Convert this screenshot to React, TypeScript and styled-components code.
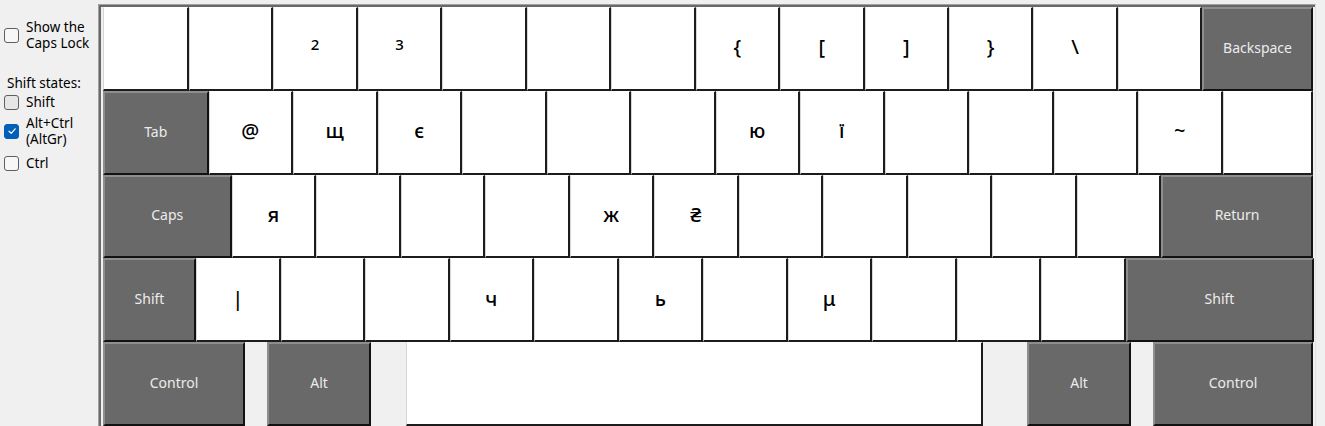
import React from "react";
import styled, { createGlobalStyle } from "styled-components";

const GlobalStyle = createGlobalStyle`
  html, body {
    margin: 0;
    padding: 0;
    background: #f0f0f0;
    font-family: "Noto Sans", "Open Sans", sans-serif;
  }
  * { box-sizing: border-box; }
`;

const Layout = styled.div`
  display: flex;
  align-items: flex-start;
  width: 1325px;
  height: 426px;
  overflow: hidden;
  background: #f0f0f0;
`;

const Sidebar = styled.div`
  width: 98px;
  flex: none;
  display: flex;
  flex-direction: column;
  padding: 19px 0 0 4px;
  font-size: 13.5px;
  line-height: 16px;
  color: #000;
`;

const CheckRow = styled.label<{ $mt: number }>`
  display: flex;
  align-items: center;
  gap: 7px;
  margin-top: ${(p) => p.$mt}px;
`;

const LabelText = styled.span`
  display: flex;
  flex-direction: column;
`;

const Line = styled.span`
  display: block;
  height: 16px;
  line-height: 16px;
  white-space: nowrap;
`;

const Box = styled.span<{ $checked?: boolean; $hover?: boolean }>`
  flex: none;
  width: 15px;
  height: 15px;
  border-radius: 3px;
  border: 1px solid ${(p) => (p.$checked ? "#005fb8" : "#5f5f5f")};
  background: ${(p) => (p.$checked ? "#005fb8" : p.$hover ? "#e6e6e6" : "#f7f7f7")};
  display: flex;
  align-items: center;
  justify-content: center;
`;

const Heading = styled.div`
  margin-top: 24px;
  padding-left: 3px;
`;

const Panel = styled.div`
  margin-top: 4px;
  width: 1218px;
  height: 430px;
  flex: none;
  border-top: 1px solid #a0a0a0;
  border-left: 1px solid #a0a0a0;
  border-right: 1px solid #e3e3e3;
  box-shadow: inset 2px 2px 0 #696969;
  padding: 2px 0 0 4px;
  background: #f0f0f0;
  display: flex;
  flex-direction: column;
`;

const Row = styled.div`
  display: flex;
  height: 83.75px;
  flex: none;
`;

const Key = styled.div<{ $w: number; $dark?: boolean; $small?: boolean }>`
  flex: none;
  width: ${(p) => p.$w}px;
  height: 100%;
  display: flex;
  align-items: center;
  justify-content: center;
  background: ${(p) => (p.$dark ? "#696969" : "#ffffff")};
  color: ${(p) => (p.$dark ? "#ececec" : "#000")};
  border-style: solid;
  border-width: ${(p) => (p.$dark ? "2px 2px 2px 2px" : "1px 2px 2px 1px")};
  border-color: ${(p) =>
    p.$dark ? "#8e8e8e #121212 #121212 #8e8e8e" : "#ffffff #1c1c1c #1c1c1c #d6d6d6"};
  font-size: ${(p) => (p.$dark ? "14px" : p.$small ? "15px" : "20px")};
  font-weight: ${(p) => (p.$dark ? 400 : 500)};
  line-height: 1;
  padding-bottom: ${(p) => (p.$small ? "8px" : "2px")};
`;

const Gap = styled.div<{ $w: number }>`
  flex: none;
  width: ${(p) => p.$w}px;
`;

type K = { l: string; w: number; dark?: boolean; small?: boolean } | { gap: number };

const chars = (list: string[], w: number): K[] => list.map((l) => ({ l, w, small: /^[0-9]$/.test(l) }));

const rows: K[][] = [
  [
    { l: "", w: 86 },
    ...chars(["", "2", "3", "", "", "", "{", "[", "]", "}", "\\", ""], 84.45),
    { l: "Backspace", w: 110.5, dark: true },
  ],
  [
    { l: "Tab", w: 105.5, dark: true },
    ...chars(["@", "щ", "є", "", "", "", "ю", "ї", "", "", "", "~"], 84.5),
    { l: "", w: 90 },
  ],
  [
    { l: "Caps", w: 128.5, dark: true },
    ...chars(["я", "", "", "", "ж", "₴", "", "", "", "", ""], 84.5),
    { l: "Return", w: 152, dark: true },
  ],
  [
    { l: "Shift", w: 93, dark: true },
    ...chars(["|", "", "", "ч", "", "ь", "", "μ", "", "", ""], 84.5),
    { l: "Shift", w: 188, dark: true },
  ],
  [
    { l: "Control", w: 142, dark: true },
    { gap: 22 },
    { l: "Alt", w: 104, dark: true },
    { gap: 35 },
    { l: "", w: 577 },
    { gap: 44 },
    { l: "Alt", w: 104, dark: true },
    { gap: 22 },
    { l: "Control", w: 160, dark: true },
  ],
];

const Check = () => (
  <svg width="10" height="10" viewBox="0 0 10 10">
    <path d="M2 5.2 L4.2 7.3 L8.2 2.8" fill="none" stroke="#fff" strokeWidth="1.2" strokeLinecap="round" strokeLinejoin="round" />
  </svg>
);

export default function App() {
  return (
    <>
      <GlobalStyle />
      <Layout>
        <Sidebar>
          <CheckRow $mt={0}>
            <Box />
            <LabelText>
              <Line>Show the</Line>
              <Line>Caps Lock</Line>
            </LabelText>
          </CheckRow>
          <Heading>Shift states:</Heading>
          <CheckRow $mt={3}>
            <Box $hover />
            <LabelText>
              <Line>Shift</Line>
            </LabelText>
          </CheckRow>
          <CheckRow $mt={5}>
            <Box $checked>
              <Check />
            </Box>
            <LabelText>
              <Line>Alt+Ctrl</Line>
              <Line>(AltGr)</Line>
            </LabelText>
          </CheckRow>
          <CheckRow $mt={8}>
            <Box />
            <LabelText>
              <Line>Ctrl</Line>
            </LabelText>
          </CheckRow>
        </Sidebar>
        <Panel>
          {rows.map((row, i) => (
            <Row key={i}>
              {row.map((k, j) =>
                "gap" in k ? (
                  <Gap key={j} $w={k.gap} />
                ) : (
                  <Key key={j} $w={k.w} $dark={k.dark} $small={k.small}>
                    {k.l}
                  </Key>
                )
              )}
            </Row>
          ))}
        </Panel>
      </Layout>
    </>
  );
}
